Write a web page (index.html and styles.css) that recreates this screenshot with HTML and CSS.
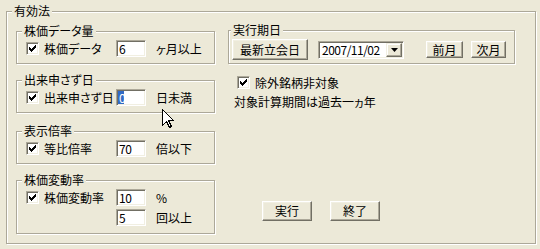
FILE: index.html
```html
<!DOCTYPE html>
<html lang="ja">
<head>
<meta charset="utf-8">
<title>有効法</title>
<link rel="stylesheet" href="styles.css">
</head>
<body>
<div class="group outer">
  <span class="group-title">有効法</span>
  <div class="left">
    <div class="group lgroup g1">
      <span class="group-title">株価データ量</span>
      <div class="row">
        <span class="cb"><svg viewBox="0 0 9 9" width="9" height="9"><path class="tick" d="M1 3h1v3h-1z M2 4h1v3h-1z M3 5h1v3h-1z M4 4h1v3h-1z M5 3h1v3h-1z M6 2h1v3h-1z M7 1h1v3h-1z"/></svg></span>
        <span class="lbl">株価データ</span>
        <span class="edit">6</span>
        <span class="unit">ヶ月以上</span>
      </div>
    </div>
    <div class="group lgroup g2">
      <span class="group-title">出来申さず日</span>
      <div class="row">
        <span class="cb"><svg viewBox="0 0 9 9" width="9" height="9"><path class="tick" d="M1 3h1v3h-1z M2 4h1v3h-1z M3 5h1v3h-1z M4 4h1v3h-1z M5 3h1v3h-1z M6 2h1v3h-1z M7 1h1v3h-1z"/></svg></span>
        <span class="lbl">出来申さず日</span>
        <span class="edit"><span class="sel">0</span></span>
        <span class="unit">日未満</span>
      </div>
    </div>
    <div class="group lgroup g3">
      <span class="group-title">表示倍率</span>
      <div class="row">
        <span class="cb"><svg viewBox="0 0 9 9" width="9" height="9"><path class="tick" d="M1 3h1v3h-1z M2 4h1v3h-1z M3 5h1v3h-1z M4 4h1v3h-1z M5 3h1v3h-1z M6 2h1v3h-1z M7 1h1v3h-1z"/></svg></span>
        <span class="lbl">等比倍率</span>
        <span class="edit">70</span>
        <span class="unit">倍以下</span>
      </div>
    </div>
    <div class="group lgroup g4">
      <span class="group-title">株価変動率</span>
      <div class="rows">
        <div class="row">
          <span class="cb"><svg viewBox="0 0 9 9" width="9" height="9"><path class="tick" d="M1 3h1v3h-1z M2 4h1v3h-1z M3 5h1v3h-1z M4 4h1v3h-1z M5 3h1v3h-1z M6 2h1v3h-1z M7 1h1v3h-1z"/></svg></span>
          <span class="lbl">株価変動率</span>
          <span class="edit">10</span>
          <span class="unit">%</span>
        </div>
        <div class="row">
          <span class="edit indent">5</span>
          <span class="unit">回以上</span>
        </div>
      </div>
    </div>
  </div>
  <div class="right">
    <div class="group exec">
      <span class="group-title tight">実行期日</span>
      <div class="exec-row">
        <span class="btn btn-new">最新立会日</span>
        <span class="combo">
          <span class="combo-text">2007/11/02</span>
          <span class="dd"><svg viewBox="0 0 7 4" width="7" height="4"><polygon points="0,0 7,0 3.5,4" fill="#000"/></svg></span>
        </span>
        <span class="btn btn-prev">前月</span>
        <span class="btn btn-next">次月</span>
      </div>
    </div>
    <div class="opt">
      <span class="cb"><svg viewBox="0 0 9 9" width="9" height="9"><path class="tick" d="M1 3h1v3h-1z M2 4h1v3h-1z M3 5h1v3h-1z M4 4h1v3h-1z M5 3h1v3h-1z M6 2h1v3h-1z M7 1h1v3h-1z"/></svg></span>
      <span class="opt-lbl">除外銘柄非対象</span>
    </div>
    <div class="note">対象計算期間は過去一ヵ年</div>
    <div class="actions">
      <span class="btn btn-act">実行</span>
      <span class="btn btn-act">終了</span>
    </div>
  </div>
</div>
<svg class="cursor" viewBox="0 0 13 20" width="13" height="20"><path d="M0.5 0.5 L0.5 16.5 L4.5 12.5 L7.5 18.5 L9.5 17.5 L6.5 11.5 L11.5 11.5 Z" fill="#fff" stroke="#000" stroke-width="1" stroke-linejoin="miter"/></svg>
</body>
</html>
```

FILE: styles.css
```css
* { box-sizing: border-box; }

body {
  margin: 0;
  width: 540px;
  height: 249px;
  overflow: hidden;
  position: relative;
  background: #ECE9D8;
  color: #000;
  font-family: "Noto Sans CJK JP", "Noto Sans CJK SC", sans-serif;
  font-size: 12px;
  line-height: 14px;
  font-feature-settings: "palt";
}

.group {
  position: relative;
  border: 1px solid #ACA899;
  box-shadow: inset 1px 1px 0 #fff, 1px 1px 0 #fff;
}

.group-title {
  position: absolute;
  top: -8px;
  left: 5px;
  padding: 0 2px;
  background: #ECE9D8;
  line-height: 14px;
  white-space: nowrap;
}
.group-title.tight { left: 2px; }

.outer {
  margin: 11px 0 0 6px;
  width: 530px;
  height: 233px;
  padding: 18px 0 0 9px;
  display: flex;
  align-items: flex-start;
}

.left {
  width: 199px;
  flex: none;
  display: flex;
  flex-direction: column;
}

.lgroup {
  width: 199px;
  height: 33px;
  padding: 8px 0 0 9px;
}
.g1 { margin-top: 1px; }
.g2 { margin-top: 16px; }
.g3 { margin-top: 18px; }
.g4 { margin-top: 16px; height: 54px; }

.rows {
  display: flex;
  flex-direction: column;
  gap: 3px;
}

.row {
  display: flex;
  align-items: center;
  height: 17px;
}

.cb {
  flex: none;
  display: block;
  width: 13px;
  height: 13px;
  padding: 1px;
  background: #fff;
  border: 1px solid;
  border-color: #ACA899 #fff #fff #ACA899;
  box-shadow: inset 1px 1px 0 #716F64, inset -1px -1px 0 #F1EFE2;
}
.cb svg { display: block; shape-rendering: crispEdges; }
.tick { fill: #000; }

.lbl {
  flex: none;
  width: 72px;
  margin-left: 5px;
  white-space: nowrap;
}

.edit {
  flex: none;
  display: flex;
  align-items: center;
  width: 30px;
  height: 17px;
  padding-left: 2px;
  background: #fff;
  border: 1px solid;
  border-color: #ACA899 #fff #fff #ACA899;
  box-shadow: inset 1px 1px 0 #716F64, inset -1px -1px 0 #F1EFE2;
  line-height: 13px;
  letter-spacing: -0.3px;
}
.edit.indent { margin-left: 90px; }

.sel {
  display: block;
  margin-left: -1px;
  padding: 0 0 0 1px;
  width: 6px;
  background: #316AC5;
  color: #fff;
  line-height: 13px;
}

.unit {
  margin-left: 10px;
  white-space: nowrap;
}

.right {
  margin-left: 13px;
  width: 288px;
  flex: none;
  display: flex;
  flex-direction: column;
}

.exec {
  width: 287px;
  height: 34px;
  padding: 8px 0 0 3px;
}

.exec-row {
  display: flex;
  align-items: center;
  height: 21px;
}

.btn {
  flex: none;
  display: flex;
  align-items: center;
  justify-content: center;
  background: #ECE9D8;
  border: 1px solid;
  border-color: #fff #716F64 #716F64 #fff;
  box-shadow: inset -1px -1px 0 #ACA899, inset 1px 1px 0 #F1EFE2;
  white-space: nowrap;
  line-height: 14px;
}

.btn-new { width: 76px; height: 21px; }
.btn-prev { width: 37px; height: 17px; margin-left: 22px; }
.btn-next { width: 35px; height: 17px; margin-left: 8px; }

.combo {
  flex: none;
  display: flex;
  align-items: stretch;
  width: 86px;
  height: 18px;
  margin-left: 10px;
  padding: 1px 1px 1px 3px;
  background: #fff;
  border: 1px solid;
  border-color: #ACA899 #fff #fff #ACA899;
  box-shadow: inset 1px 1px 0 #716F64, inset -1px -1px 0 #F1EFE2;
}

.combo-text {
  display: flex;
  align-items: center;
  line-height: 14px;
  letter-spacing: -0.5px;
}

.dd {
  margin-left: auto;
  width: 16px;
  display: flex;
  align-items: center;
  justify-content: center;
  background: #ECE9D8;
  border: 1px solid;
  border-color: #F1EFE2 #716F64 #716F64 #F1EFE2;
  box-shadow: inset -1px -1px 0 #ACA899, inset 1px 1px 0 #fff;
}
.dd svg { display: block; }

.opt {
  display: flex;
  align-items: center;
  height: 13px;
  margin: 12px 0 0 9px;
}
.opt-lbl { margin-left: 5px; white-space: nowrap; }

.note {
  margin: 6px 0 0 6px;
  line-height: 14px;
  white-space: nowrap;
}

.actions {
  display: flex;
  gap: 18px;
  margin: 92px 0 0 34px;
}
.btn-act { width: 50px; height: 20px; }

.cursor {
  position: absolute;
  left: 162px;
  top: 109px;
  display: block;
  shape-rendering: crispEdges;
}
```
